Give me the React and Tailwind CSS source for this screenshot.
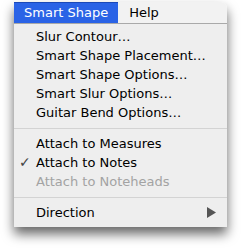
export default function App() {
  const font = { fontFamily: '"DejaVu Sans", "Liberation Sans", sans-serif' };
  const Row = ({ children, check, disabled, arrow }) => (
    <div
      className={`relative flex items-center h-[19px] pl-[22px] pr-[10px] text-[13px] ${
        disabled ? "text-[#a3a3a3]" : "text-black"
      }`}
    >
      {check && (
        <span className="absolute left-[5px] text-[14px] font-bold text-[#444]">✓</span>
      )}
      <span className="flex-1">{children}</span>
      {arrow && (
        <svg width="9" height="11" viewBox="0 0 9 11" className="mr-[1px]">
          <path d="M0 0 L9 5.5 L0 11 Z" fill="#555" />
        </svg>
      )}
    </div>
  );
  const Sep = () => <div className="mt-[6px] mb-[5px] h-px bg-[#d3d3d3]" />;

  return (
    <div className="w-[241px] h-[250px] bg-white pl-[14px] pt-[2px]" style={font}>
      <div className="w-[213px] rounded-tr-[6px] shadow-[0_7px_12px_rgba(0,0,0,0.6)]">
        {/* Menu bar */}
        <div className="flex h-[22px] bg-[#f2f2f2] border-b border-[#a9a9a9] rounded-tr-[6px] text-[13px]">
          <div className="flex items-center px-[10px] bg-[#2a63e6] border-t border-[#1b49b8] text-white">
            Smart Shape
          </div>
          <div className="flex items-center px-[11px] text-black">Help</div>
        </div>
        {/* Menu */}
        <div className="bg-[#eeeeee] pt-[3px] pb-[5px]">
          <Row>Slur Contour…</Row>
          <Row>Smart Shape Placement…</Row>
          <Row>Smart Shape Options…</Row>
          <Row>Smart Slur Options…</Row>
          <Row>Guitar Bend Options…</Row>
          <Sep />
          <Row>Attach to Measures</Row>
          <Row check>Attach to Notes</Row>
          <Row disabled>Attach to Noteheads</Row>
          <Sep />
          <Row arrow>Direction</Row>
        </div>
      </div>
    </div>
  );
}
